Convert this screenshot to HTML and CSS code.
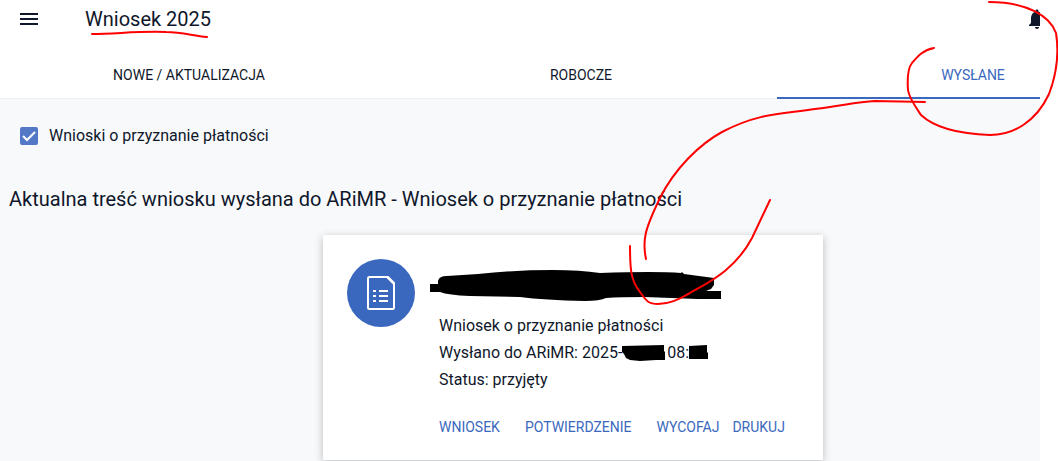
FILE: index.html
```html
<!DOCTYPE html>
<html lang="pl">
<head>
    <meta charset="UTF-8">
    <meta name="viewport" content="width=device-width, initial-scale=1.0">
    <title>Wniosek 2025</title>
    <link rel="stylesheet" href="styles.css">
</head>
<body>
    <div class="app">
        <header class="header">
            <div class="toolbar">
                <button class="icon-btn" type="button" aria-label="Menu">
                    <svg width="24" height="24" viewBox="0 0 24 24"><path d="M3 18h18v-2H3v2zm0-5h18v-2H3v2zm0-7v2h18V6H3z"/></svg>
                </button>
                <h1 class="title">Wniosek 2025</h1>
                <button class="icon-btn bell" type="button" aria-label="Powiadomienia">
                    <svg width="24" height="24" viewBox="0 0 24 24"><path d="M12 22c1.1 0 2-.9 2-2h-4c0 1.1.89 2 2 2zm6-6v-5c0-3.07-1.64-5.64-4.5-6.32V4c0-.83-.67-1.5-1.5-1.5s-1.5.67-1.5 1.5v.68C7.63 5.36 6 7.92 6 11v5l-2 2v1h16v-1l-2-2z"/></svg>
                </button>
            </div>
            <nav class="tabs">
                <button class="tab" type="button">NOWE / AKTUALIZACJA</button>
                <button class="tab" type="button">ROBOCZE</button>
                <button class="tab active" type="button">WYSŁANE</button>
            </nav>
        </header>

        <main class="content">
            <div class="filter">
                <span class="checkbox">
                    <input type="checkbox" id="payments" checked>
                    <svg class="check" width="18" height="18" viewBox="0 0 18 18"><path d="M3 9l4 4 8-8"/></svg>
                </span>
                <label for="payments">Wnioski o przyznanie płatności</label>
            </div>

            <h2 class="section-title">Aktualna treść wniosku wysłana do ARiMR - Wniosek o przyznanie płatności</h2>

            <article class="card">
                <div class="avatar">
                    <svg width="28" height="34" viewBox="0 0 28 34">
                        <path class="sheet" d="M1 2.5Q1 1 2.5 1H21l6 6v24.500Q27 33 25.500 33h-23Q1 33 1 31.500zM20.500 1.500l6 6"/>
                        <path class="rows" d="M6 15h3M12 15h9M6 20h3M12 20h9M6 25h3M12 25h9"/>
                    </svg>
                </div>
                <div class="card-body">
                    <div class="redacted-name">
                        <svg class="scribble" width="292" height="34" viewBox="0 0 292 34"><path d="M0 15h8V12Q9 7 17 7L48 5Q84 1 123 1 150 1 170 4Q226 2 251 4L252 3 254 5 284 9V16L281 20 276 22H291V30H268L215 28Q190 28 176 29 170 32 155 32 114 31 90 28 L40 27 Q18 26 10 23H0z"/></svg>
                    </div>
                    <p>Wniosek o przyznanie płatności</p>
                    <p>Wysłano do ARiMR: 2025-<svg class="mark" width="43" height="16" viewBox="0 0 43 16"><path d="M0 1L42 0V6L43 7V15H34L18 16 8 15 4 13 2 9 0 7z"/></svg><span class="hour">08:</span><svg class="mark" width="19" height="16" viewBox="0 0 19 16"><path d="M0 1L18 0V7L19 8V14H0z"/></svg></p>
                    <p>Status: przyjęty</p>
                    <div class="actions">
                        <button type="button">WNIOSEK</button>
                        <button type="button">POTWIERDZENIE</button>
                        <span class="action-pair">
                            <button type="button">WYCOFAJ</button>
                            <button type="button">DRUKUJ</button>
                        </span>
                    </div>
                </div>
            </article>
        </main>
    </div>

    <!-- red pen notes drawn over the page -->
    <svg class="pen" width="1058" height="461" viewBox="0 0 1058 461">
        <path d="M92 34C116 34 137 31 166 32C183 32 193 36 207 37"/>
        <path d="M989 2C1027 2 1050 16 1056 33C1059 52 1057 73 1049 94C1036 122 1013 135 990 135C961 134 935 128 921 115C917 109 909 98 908 90C907 76 908 68 912 63C918 56 923 50 934 48"/>
        <path d="M925 102L875 101C855 102 842 106 815 109C785 114 760 112 722 132C700 144 675 168 660 198C645 229 642 240 646 259"/>
        <path d="M630 246C630 270 631 281 640 292C647 302 649 304 658 304C672 304 682 297 690 293C709 282 735 270 752 238L770 200"/>
    </svg>
</body>
</html>
```
FILE: styles.css
```css
* {
    box-sizing: border-box;
}

body {
    margin: 0;
    background: #fff;
    color: #0f172a;
    font-family: Roboto, "Liberation Sans", sans-serif;
    font-size: 16px;
}

h1, h2, p {
    margin: 0;
    font-weight: 400;
}

button {
    padding: 0;
    border: none;
    background: none;
    color: inherit;
    font-family: inherit;
    font-size: 14px;
    cursor: pointer;
}

/* the sheet runs on past its right edge and is cut off there */
.app {
    margin-right: 18px;
    min-height: 100vh;
    overflow: hidden;
    background: #f8f9fb;
}

.header {
    background: #fff;
    border-bottom: 1px solid #eceef0;
}

.toolbar {
    display: flex;
    align-items: center;
    height: 38px;
    padding-left: 17px;
}

.icon-btn {
    display: flex;
    flex: none;
}

.icon-btn svg {
    fill: #0f172a;
}

.bell {
    margin-left: auto;
    margin-right: -9px;
}

.title {
    margin-left: 44px;
    font-size: 20px;
    line-height: 24px;
}

.tabs {
    display: grid;
    grid-template-columns: repeat(3, 1fr);
    width: calc(100% + 136px);
    margin-left: -7px;
    padding-top: 13px;
}

.tab {
    height: 48px;
    margin-bottom: -1px;
    border-top: 2px solid transparent;
    border-bottom: 2px solid transparent;
}

.tab.active {
    border-bottom-color: #3a68be;
    color: #3a68be;
}

.content {
    width: calc(100% + 106px);
    padding: 25px 9px 0;
}

.filter {
    display: flex;
    align-items: center;
    gap: 11px;
    padding-left: 11px;
    line-height: 24px;
}

.checkbox {
    position: relative;
    display: flex;
}

.checkbox input {
    appearance: none;
    width: 18px;
    height: 18px;
    margin: 0;
    border: 2px solid #64748b;
    border-radius: 2px;
}

.checkbox input:checked {
    border-color: #5379c6;
    background: #5379c6;
}

.check {
    position: absolute;
    top: 0;
    left: 0;
    fill: none;
    stroke: #fff;
    stroke-width: 2;
    pointer-events: none;
}

.section-title {
    margin: 39px 0 24px;
    font-size: 20px;
    line-height: 24px;
}

.card {
    display: flex;
    gap: 24px;
    width: 500px;
    margin: 0 auto;
    padding: 24px 24px 21px;
    background: #fff;
    box-shadow: 0 2px 8px rgba(0, 0, 0, 0.25);
}

.avatar {
    display: flex;
    flex: none;
    align-items: center;
    justify-content: center;
    width: 68px;
    height: 68px;
    border-radius: 50%;
    background: #3a68be;
}

.avatar path {
    fill: none;
    stroke: #fff;
    stroke-width: 2;
}

.card-body {
    line-height: 27px;
    white-space: nowrap;
}

.redacted-name {
    position: relative;
    height: 53px;
}

.scribble {
    position: absolute;
    top: 10px;
    left: -9px;
}

.mark {
    vertical-align: -3px;
}

.hour {
    margin-left: 2px;
}

.actions {
    display: flex;
    gap: 25px;
    margin-top: 22px;
    line-height: 24px;
}

.actions button {
    height: 24px;
    color: #3a68be;
}

.action-pair {
    display: flex;
    gap: 13px;
}

.pen {
    position: absolute;
    top: 0;
    left: 0;
    fill: none;
    stroke: #f00;
    stroke-width: 2;
    stroke-linecap: round;
    pointer-events: none;
}
```
